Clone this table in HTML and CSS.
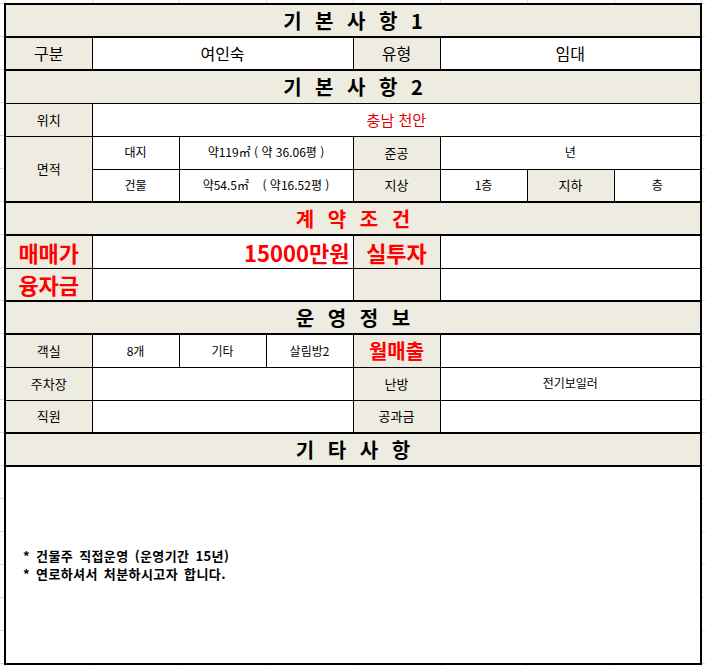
FILE: index.html
```html
<!DOCTYPE html>
<html lang="ko">
<head>
<meta charset="utf-8">
<title>매물 정보</title>
<link rel="stylesheet" href="styles.css">
</head>
<body>
<table class="sheet">
<colgroup><col><col><col><col><col><col><col><col></colgroup>
<tr class="r thick"><td colspan="8" class="title">기 본 사 항 1</td></tr>
<tr class="r thick"><td class="lbl md">구분</td><td colspan="3" class="md">여인숙</td><td class="lbl md">유형</td><td colspan="3" class="md">임대</td></tr>
<tr class="r"><td colspan="8" class="title">기 본 사 항 2</td></tr>
<tr class="r"><td class="lbl">위치</td><td colspan="7" class="loc">충남 천안</td></tr>
<tr class="r"><td class="lbl thickb" rowspan="2">면적</td><td class="sm">대지</td><td colspan="2" class="sm">약119㎡ ( 약 36.06평 )</td><td class="lbl">준공</td><td colspan="3" class="sm">년</td></tr>
<tr class="r thick"><td class="sm">건물</td><td colspan="2" class="sm">약54.5㎡ &nbsp;&nbsp; ( 약16.52평 )</td><td class="lbl">지상</td><td class="sm">1층</td><td class="lbl">지하</td><td class="sm">층</td></tr>
<tr class="r thick"><td colspan="8" class="title red">계 약 조 건</td></tr>
<tr class="r"><td class="lbl big">매매가</td><td colspan="3" class="big right">15000만원</td><td class="lbl big">실투자</td><td colspan="3"></td></tr>
<tr class="r thick"><td class="lbl big">융자금</td><td colspan="3"></td><td class="lbl"></td><td colspan="3"></td></tr>
<tr class="r thick"><td colspan="8" class="title">운 영 정 보</td></tr>
<tr class="r"><td class="lbl">객실</td><td class="sm">8개</td><td class="sm">기타</td><td class="sm">살림방2</td><td class="lbl mid-red">월매출</td><td colspan="3"></td></tr>
<tr class="r"><td class="lbl">주차장</td><td colspan="3"></td><td class="lbl">난방</td><td colspan="3" class="sm">전기보일러</td></tr>
<tr class="r thick"><td class="lbl">직원</td><td colspan="3"></td><td class="lbl">공과금</td><td colspan="3"></td></tr>
<tr class="r thick"><td colspan="8" class="title">기 타 사 항</td></tr>
<tr class="notes-row"><td colspan="8" class="notes"><p>* 건물주 직접운영 (운영기간 15년)</p><p>* 연로하셔서 처분하시고자 합니다.</p></td></tr>
</table>
</body>
</html>
```
FILE: styles.css
```css
html {
  height: 100%;
}
body {
  margin: 0;
  min-height: 100%;
  font-family: "Noto Sans CJK KR", "Noto Sans", sans-serif;
  color: #000;
  background-color: #fff;
  background-image:
    linear-gradient(to right, #dadada 1px, transparent 1px),
    linear-gradient(to bottom, #dadada 1px, transparent 1px);
  background-size: 87px 100%, 100% 33px;
  background-position: 5px 0, 0 3px;
}
.sheet {
  border-collapse: collapse;
  table-layout: fixed;
  width: 698px;
  margin: 3px 0 0 4px;
  border: 2px solid #000;
  background: #fff;
}
.sheet col {
  width: 87px;
}
.sheet td {
  border: 1px solid #000;
  padding: 0;
  text-align: center;
  vertical-align: middle;
  line-height: 1.2;
  font-size: 13px;
  background: #fff;
  white-space: nowrap;
  overflow: hidden;
}
.r {
  height: 33px;
}
.thick td,
.sheet td.thickb {
  border-bottom: 2px solid #000;
}
.sheet td.title {
  background: #eeece1;
  font-size: 20px;
  font-weight: bold;
  word-spacing: 8px;
}
.sheet td.lbl {
  background: #eeece1;
}
.sheet td.md {
  font-size: 16px;
}
.sheet td.sm {
  font-size: 12px;
}
.sheet td.loc {
  font-size: 15px;
  color: #e00000;
}
.sheet td.big {
  font-size: 22px;
  font-weight: bold;
  color: #ff0000;
}
.sheet td.right {
  text-align: right;
  padding-right: 3px;
}
.sheet td.mid-red {
  font-size: 20px;
  font-weight: bold;
  color: #ff0000;
}
.red,
.sheet td.red {
  color: #ff0000;
}
.notes-row {
  height: 198px;
}
.sheet td.notes {
  text-align: left;
  padding-left: 17px;
  font-weight: bold;
  font-size: 13px;
  line-height: 18px;
  letter-spacing: 0.4px;
  word-spacing: 2px;
}
.notes p {
  margin: 0;
}
```
